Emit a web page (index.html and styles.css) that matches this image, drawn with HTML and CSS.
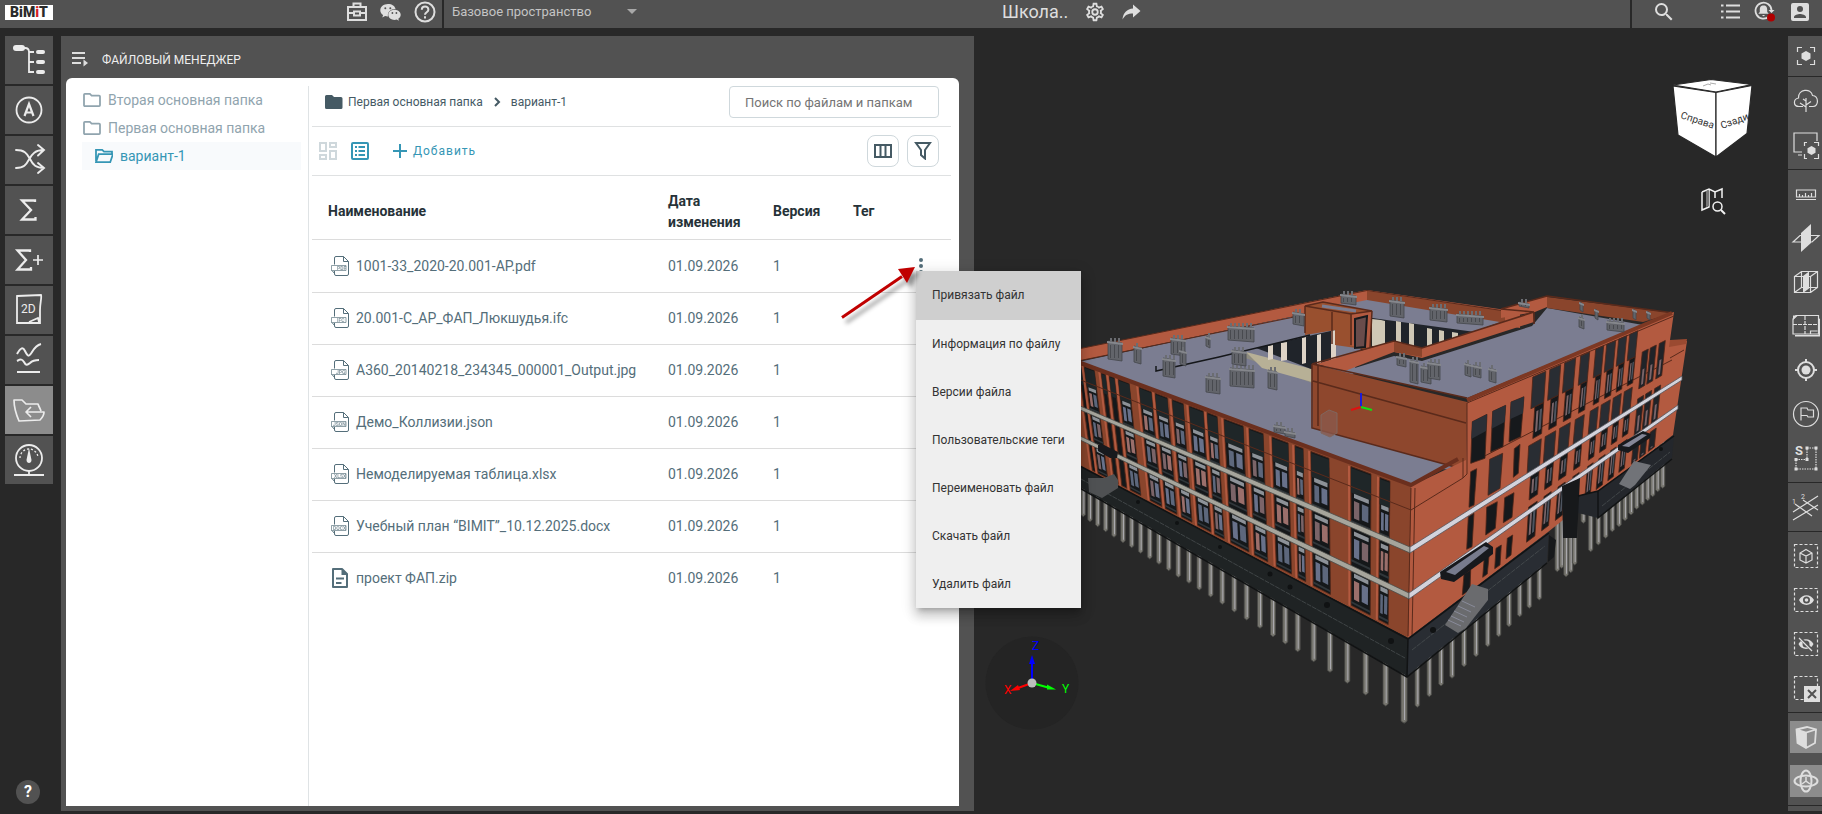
FILE: index.html
```html
<!DOCTYPE html>
<html lang="ru">
<head>
<meta charset="utf-8">
<title>BiMiT</title>
<link rel="stylesheet" href="styles.css">
</head>
<body>
<svg class="defs" aria-hidden="true">
  <defs>
    <symbol id="folder" viewBox="2 3 20 18"><path d="M9.2 6l2 2H20v10H4V6h5.2M10 4H4a2 2 0 0 0-2 2v12c0 1.1.9 2 2 2h16a2 2 0 0 0 2-2V8a2 2 0 0 0-2-2h-8z"/></symbol>
    <symbol id="page" viewBox="0 0 18 20">
      <path d="M3.500 8.500V2Q3.500.5 5 .5H12.500L17.500 5.500V18Q17.500 19.500 16 19.500H5Q3.500 19.500 3.500 18V15M12.500.5V5.500H17.500" fill="none" stroke="currentColor"/>
      <path d="M.5 9.500H15V14.500H.5zM.5 14.500L3 17V15" fill="#fff" stroke="currentColor" stroke-opacity=".65"/>
    </symbol>
  </defs>
</svg>

<header class="topbar">
  <div class="top-left">
    <a class="logo" href="#" aria-label="BiMiT"><span>B</span><span>i</span><span>M</span><span class="red">i</span><span>T</span></a>
    <nav class="top-tools">
      <button aria-label="Проекты"><svg width="20" height="20" viewBox="0 0 20 20" fill="none" stroke="currentColor" stroke-width="2"><path d="M1 5h18v13H1zM6.500 5V1.500h7V5M1 11h6M13 11h6M7 9.500h6v4H7z"/></svg></button>
      <button aria-label="Чат"><svg width="21" height="18" viewBox="0 0 21 18"><path fill="currentColor" d="M8 1C3.600 1 .3 3.800.3 7.200c0 2 1.100 3.700 2.800 4.900l-.8 2.400 2.800-1.400c1 .3 2 .5 2.900.4-.8-4.200 2.500-7.500 7.500-7.400C15 3 12 1 8 1z"/><path fill="currentColor" d="M14.500 6.700c-3.600 0-6.200 2.300-6.200 5 0 2.900 2.800 5.200 6.200 5.200.8 0 1.500-.1 2.200-.3l2.200 1.200-.6-2c1.500-1 2.400-2.400 2.400-4.100 0-2.700-2.800-5-6.200-5z"/><g fill="#525252"><circle cx="5.300" cy="5.300" r="1"/><circle cx="10.300" cy="5.300" r="1"/><circle cx="12.400" cy="10" r=".9"/><circle cx="16.400" cy="10" r=".9"/></g></svg></button>
      <button aria-label="Справка"><svg width="22" height="22" viewBox="0 0 22 22" fill="none" stroke="currentColor" stroke-width="2"><circle cx="11" cy="11" r="9.500"/><path d="M7.800 8.700c0-4.200 6.600-4.200 6.600 0 0 2.500-3.400 2.600-3.400 5M11 15.200v2.200"/></svg></button>
    </nav>
  </div>
  <div class="top-space">
    <select class="space-select" aria-label="Пространство"><option>Базовое пространство</option></select>
    <svg class="caret" width="10" height="5" viewBox="0 0 10 5"><path d="M0 0h10L5 5z" fill="currentColor"/></svg>
  </div>
  <div class="top-project">
    <h1>Школа..</h1>
    <button aria-label="Настройки"><svg width="22" height="22" viewBox="0 0 24 24"><path fill="currentColor" d="M12 8a4 4 0 1 1 0 8 4 4 0 0 1 0-8m0 2a2 2 0 1 0 0 4 2 2 0 0 0 0-4M10 22c-.25 0-.46-.18-.5-.42l-.37-2.650c-.63-.25-1.170-.59-1.690-.99l-2.490 1.010c-.22.08-.49 0-.61-.22l-2-3.460c-.13-.22-.07-.49.12-.64l2.110-1.660L4.500 12l.07-1-2.110-1.630c-.19-.15-.25-.42-.12-.64l2-3.460c.12-.22.39-.31.61-.22l2.490 1c.52-.39 1.060-.73 1.690-.98l.37-2.650c.04-.24.25-.42.5-.42h4c.25 0 .46.18.5.42l.37 2.650c.63.25 1.170.59 1.690.98l2.490-1c.22-.09.49 0 .61.22l2 3.460c.13.22.07.49-.12.64L19.430 11l.07 1-.07 1 2.110 1.630c.19.15.25.42.12.64l-2 3.460c-.12.22-.39.31-.61.22l-2.490-1c-.52.39-1.060.73-1.690.98l-.37 2.650c-.04.24-.25.42-.5.42zM11.250 4l-.37 2.610c-1.200.25-2.260.89-3.030 1.780L5.440 7.350l-.75 1.300L6.800 10.200c-.4 1.170-.4 2.440 0 3.600l-2.120 1.560.75 1.300 2.430-1.040c.77.88 1.820 1.520 3.010 1.760l.37 2.620h1.520l.37-2.610c1.190-.25 2.240-.89 3.010-1.770l2.430 1.040.75-1.300-2.120-1.550c.4-1.170.4-2.440 0-3.610l2.110-1.550-.75-1.300-2.410 1.040c-.77-.89-1.830-1.530-3.030-1.770L12.750 4z"/></svg></button>
    <button aria-label="Поделиться"><svg width="19" height="16" viewBox="0 0 19 16"><path fill="currentColor" d="M11 0.500L18.500 7 11 13.500V9.500C6 9.500 3 11 .5 15.500 1 9 5 5 11 4.500z"/></svg></button>
  </div>
  <div class="top-right">
    <button aria-label="Поиск"><svg width="24" height="24" viewBox="0 0 24 24"><path fill="currentColor" d="M15.500 14h-.79l-.28-.27A6.470 6.470 0 0 0 16 9.500 6.500 6.500 0 1 0 9.500 16c1.610 0 3.090-.59 4.230-1.570l.27.280v.79l5 4.990L20.490 19zm-6 0a4.500 4.500 0 1 1 0-9 4.500 4.500 0 0 1 0 9z"/></svg></button>
    <span class="grow"></span>
    <button aria-label="Список"><svg width="20" height="18" viewBox="0 0 20 18" stroke="currentColor" stroke-width="2"><path d="M0 2.500h2.500M5 2.500h14M0 8.500h2.500M5 8.500h14M0 14.500h2.500M5 14.500h14"/></svg></button>
    <button aria-label="Уведомления"><svg width="21" height="21" viewBox="0 0 21 21"><path d="M15 15.500A8 8 0 1 1 17.500 9" fill="none" stroke="currentColor" stroke-width="1.800"/><path fill="currentColor" d="M9.500 4.500c-3 0-3.700 2-3.700 4.500v2l-1.500 1.800h10.400L13.200 11V9c0-2.500-.7-4.500-3.700-4.500zM8.300 14h2.500c0 1.500-2.500 1.500-2.500 0zM14.500 9h6L17.500 12z"/><circle cx="17" cy="16.500" r="4" fill="#b00000"/></svg></button>
    <button aria-label="Профиль"><svg width="24" height="24" viewBox="0 0 24 24"><path fill="currentColor" d="M3 5v14a2 2 0 0 0 2 2h14a2 2 0 0 0 2-2V5a2 2 0 0 0-2-2H5a2 2 0 0 0-2 2zm12 4a3 3 0 1 1-6 0 3 3 0 0 1 6 0zm-9 8c0-2 4-3.100 6-3.100s6 1.100 6 3.100v1H6z"/></svg></button>
  </div>
</header>

<main class="workspace">
  <nav class="rail">
    <button aria-label="Структура"><svg viewBox="0 0 48 48" fill="none" stroke="currentColor" stroke-width="1.800"><path d="M14 12h6q4 0 4 4v20h5M24 16h5M24 26h5"/><g fill="currentColor" stroke="none"><rect x="8" y="9" width="12" height="6" rx="3"/><rect x="31" y="14" width="9" height="4" rx="2"/><rect x="31" y="24" width="9" height="4" rx="2"/><rect x="31" y="34" width="9" height="4" rx="2"/></g></svg></button>
    <button aria-label="Атрибуты"><svg viewBox="0 0 48 48" fill="none" stroke="currentColor" stroke-width="1.800"><circle cx="24" cy="24" r="12.500"/><path stroke-width="2.200" d="M19.500 30L24 18l4.500 12M21 26.500h6"/></svg></button>
    <button aria-label="Коллизии"><svg viewBox="0 0 48 48" fill="none" stroke="currentColor" stroke-width="1.900" stroke-linecap="round"><path d="M11 14c8 0 11 3 14 9s6 9 14 9M11 32c8 0 10-3 13-8.500S30 14 39 14M33 9l6 5-6 5.500M33 27l6 5-6 5"/></svg></button>
    <button aria-label="Сумма"><svg viewBox="0 0 48 48" fill="none" stroke="currentColor" stroke-width="2.300"><path d="M30 16v-1.500H17L26 24 17 33.500H30.500V31"/></svg></button>
    <button aria-label="Сумма плюс"><svg viewBox="0 0 48 48" fill="none" stroke="currentColor" stroke-width="2.300"><path d="M25 16v-1.500H12.500L21 24 12.500 33.500H26V31"/><path stroke-width="1.700" d="M28 24h10M33 19v10"/></svg></button>
    <button aria-label="Чертежи 2D"><svg viewBox="0 0 48 48" fill="none" stroke="currentColor" stroke-width="1.800"><path d="M12 10l24-1c1 2-1 8-1 15v13H12zM24 36l9-4 1 4"/><text x="16" y="27" class="glyph">2D</text></svg></button>
    <button aria-label="Графики"><svg viewBox="0 0 48 48" fill="none" stroke="currentColor" stroke-width="2"><path d="M12 18c4-7 6-7 8-3 3 6 4 6 7 1 3-5 5-7 9-8M12 25c4-2 5-2 7 1 2 4 3 3 6 1 3-3 6-3 9-3M12 36h23"/></svg></button>
    <button class="active" aria-label="Файловый менеджер"><svg viewBox="0 0 48 48" fill="none" stroke="currentColor" stroke-width="1.700" stroke-linejoin="round"><path d="M36 25c-1-3-2-4-3-7L21 18l-4-4H9c0 7 2 14 5 21l21-1c2-2 4-5 4-8H21M26 21l-5 5 5 5"/></svg></button>
    <button aria-label="Показатели"><svg viewBox="0 0 48 48" fill="none" stroke="currentColor" stroke-width="1.800"><circle cx="24" cy="22" r="13"/><path d="M15 22a9 9 0 0 1 18 0" stroke-width="1.300" stroke-dasharray="2 2"/><path d="M24 12l2.500 12c0 4-5 4-5 0z" fill="currentColor" stroke="none"/><path d="M24 35v3.500M9 39h30"/></svg></button>
    <span class="grow"></span>
    <button class="help" aria-label="Помощь">?</button>
  </nav>

  <section class="panel">
    <header class="panel-head">
      <svg width="17" height="15" viewBox="0 0 17 15" stroke="currentColor" stroke-width="2"><path d="M0 1h13M0 6h13M0 11h9"/><path d="M11.500 7.500l4.500 3.500-4.500 3.500z" fill="currentColor" stroke="none"/></svg>
      <h2>ФАЙЛОВЫЙ МЕНЕДЖЕР</h2>
    </header>
    <div class="sheet">
      <nav class="tree">
        <a href="#"><svg><use href="#folder"/></svg>Вторая основная папка</a>
        <a href="#"><svg><use href="#folder"/></svg>Первая основная папка</a>
        <a href="#" class="current"><svg viewBox="2 3 20 18"><path d="M3 18V5h7l2 2h9v3M3 19L6 10h16l-3 9z" fill="none" stroke="currentColor" stroke-width="2"/></svg>вариант-1</a>
      </nav>
      <div class="content">
        <div class="crumb-row">
          <nav class="crumbs">
            <svg width="18" height="14" viewBox="0 0 18 14"><path d="M1.500 0H7l2 2h7a1.500 1.500 0 0 1 1.500 1.500v9A1.500 1.500 0 0 1 16 14H1.500A1.500 1.500 0 0 1 0 12.500v-11A1.500 1.500 0 0 1 1.500 0z" fill="currentColor"/></svg>
            <a href="#">Первая основная папка</a>
            <svg class="chev" width="7" height="10" viewBox="0 0 7 10"><path d="M1 1l4 4-4 4" fill="none" stroke="currentColor" stroke-width="2"/></svg>
            <a href="#">вариант-1</a>
          </nav>
          <input class="search" type="text" placeholder="Поиск по файлам и папкам" aria-label="Поиск по файлам и папкам">
        </div>
        <div class="tool-row">
          <button class="view off" aria-label="Плитка"><svg width="18" height="18" viewBox="0 0 18 18" fill="none" stroke="currentColor" stroke-width="2"><path d="M1 1h6v8H1zM11 1h6v4h-6zM1 13h6v4H1zM11 9h6v8h-6z"/></svg></button>
          <button class="view" aria-label="Список"><svg width="18" height="18" viewBox="0 0 18 18" fill="none" stroke="currentColor" stroke-width="2"><rect x="1" y="1" width="16" height="16" rx="1"/><path d="M4 5h2M7.500 5h6.500M4 9h2M7.500 9h6.500M4 13h2M7.500 13h6.500"/></svg></button>
          <button class="add"><svg width="14" height="14" viewBox="0 0 14 14"><path d="M7 0v14M0 7h14" stroke="currentColor" stroke-width="2"/></svg>Добавить</button>
          <span class="grow"></span>
          <button class="boxed" aria-label="Колонки"><svg width="18" height="14" viewBox="0 0 18 14" fill="none" stroke="currentColor" stroke-width="2"><path d="M1 1h16v12H1zM6.500 1v12M11.500 1v12"/></svg></button>
          <button class="boxed" aria-label="Фильтр"><svg width="18" height="18" viewBox="0 0 18 18" fill="none" stroke="currentColor" stroke-width="2"><path d="M2 1h14l-5 7v8.500L7 13V8z"/></svg></button>
        </div>
        <table class="files">
          <colgroup><col><col class="c-date"><col class="c-ver"><col class="c-tag"><col class="c-act"></colgroup>
          <thead><tr><th>Наименование</th><th>Дата изменения</th><th>Версия</th><th>Тег</th><th></th></tr></thead>
          <tbody>
            <tr><td><a href="#"><svg class="fi"><use href="#page"/><text x="6" y="14">PDF</text></svg>1001-33_2020-20.001-АР.pdf</a></td><td>01.09.2026</td><td>1</td><td></td>
              <td class="actions">
                <button class="more" aria-label="Действия"><svg width="4" height="16" viewBox="0 0 4 16" fill="currentColor"><circle cx="2" cy="2" r="2"/><circle cx="2" cy="8" r="2"/><circle cx="2" cy="14" r="2"/></svg></button>
                <div class="menu" role="menu">
                  <button role="menuitem" class="hover">Привязать файл</button>
                  <button role="menuitem">Информация по файлу</button>
                  <button role="menuitem">Версии файла</button>
                  <button role="menuitem">Пользовательские теги</button>
                  <button role="menuitem">Переименовать файл</button>
                  <button role="menuitem">Скачать файл</button>
                  <button role="menuitem">Удалить файл</button>
                </div>
                <svg class="pointer" width="84" height="64" viewBox="0 0 84 64"><path d="M2 53.500L62 12.500" stroke="#c00000" stroke-width="3"/><path d="M75 3L58 5l9 14z" fill="#c00000"/></svg>
              </td></tr>
            <tr><td><a href="#"><svg class="fi"><use href="#page"/><text x="6" y="14">IFC</text></svg>20.001-С_АР_ФАП_Люкшудья.ifc</a></td><td>01.09.2026</td><td>1</td><td></td><td></td></tr>
            <tr><td><a href="#"><svg class="fi"><use href="#page"/><text x="5" y="14">JPG</text></svg>A360_20140218_234345_000001_Output.jpg</a></td><td>01.09.2026</td><td>1</td><td></td><td></td></tr>
            <tr><td><a href="#"><svg class="fi"><use href="#page"/><text x="2" y="14">JSON</text></svg>Демо_Коллизии.json</a></td><td>01.09.2026</td><td>1</td><td></td><td></td></tr>
            <tr><td><a href="#"><svg class="fi"><use href="#page"/><text x="3" y="14">XLSX</text></svg>Немоделируемая таблица.xlsx</a></td><td>01.09.2026</td><td>1</td><td></td><td></td></tr>
            <tr><td><a href="#"><svg class="fi"><use href="#page"/><text x="2" y="14">DOCX</text></svg>Учебный план “BIMIT”_10.12.2025.docx</a></td><td>01.09.2026</td><td>1</td><td></td><td></td></tr>
            <tr><td><a href="#"><svg class="fi" viewBox="0 0 18 20"><path d="M2 1h9l5 5v13H2z" fill="none" stroke="currentColor" stroke-width="2" stroke-linejoin="round"/><path d="M10.500 1v6H17zM5 9.500h8v2H5zM5 14h5.500v2H5z" fill="currentColor"/></svg>проект ФАП.zip</a></td><td>01.09.2026</td><td>1</td><td></td><td></td></tr>
          </tbody>
        </table>
      </div>
    </div>
  </section>

  <section class="viewport" aria-label="3D-модель">
    <svg id="scene" viewBox="974 28 814 786" preserveAspectRatio="xMidYMid meet">
      <g id="piles"></g>
      <!-- rear wing and courtyard -->
      <path fill="#b35a40" d="M1078 349L1367 290 1520 312 1520 328 1367 301 1078 361z"/>
      <path fill="#8a452c" d="M1367 291L1505 311 1505 324 1367 301z"/>
      <path fill="#7b7d91" d="M1078 362L1310 313 1310 306 1352 303 1367 300 1500 322 1466 335 1370 318 1350 385 1466 470 1438 469 1410 487z"/>
      <path fill="#7b7d91" d="M1078 363L1304 315 1315 425 1466 455 1436 470 1410 485z"/>
      <path fill="none" stroke="#5a2a1b" d="M1078 349L1367 290.500 1505 311M1078 361L1304 315"/>
      <path fill="#8e8c80" d="M1243 352L1312 371v12L1243 357z"/>
      <path fill="#b7b096" d="M1246 352L1312 369v13L1262 368z"/>
      <path fill="#20242a" d="M1256 348L1335 330v34l-24 5z"/>
      <g id="court"></g>
      <path fill="#20242a" d="M1372 318L1475 332 1420 352 1372 346z"/>
      <g id="court2"></g>
      <path fill="#99502f" d="M1305 306L1323 302 1372 311 1370 350 1335 345V330L1305 335z"/>
      <path fill="#b35a40" d="M1352 314L1372 310 1370 348 1352 346z"/>
      <path fill="#694c4b" stroke="#17191c" stroke-width="2" d="M1355 319L1367 316 1365 347 1355 348z"/>
      <path fill="none" stroke="#5a2a1b" stroke-width="1.500" d="M1305 306L1323 302 1372 311 1351 314zM1305 306V333M1332 312V344M1351 314V345M1372 311L1370 348"/>
      <path stroke="#7b7d91" stroke-width="3" d="M1322 306L1356 311"/>
      <path stroke="#15171a" stroke-width="1.500" fill="none" d="M1156 366v5L1219 357 1310 335"/>
      <!-- main block -->
      <path fill="#8e472d" d="M1312 364L1467 402 1466 470 1313 428z"/>
      <path fill="#b35a40" d="M1316 364L1394 341 1422 348 1533 312 1534 322 1422 358 1394 352 1345 371z"/>
      <path fill="#8a452c" d="M1394 342L1422 348V357L1394 352z"/>
      <path fill="#7b7d91" d="M1345 371L1394 356 1422 361 1532 326 1547 308 1643 325 1467 398z"/>
      <path fill="#b35a40" d="M1501 309L1547 296V307L1535 312 1501 318z"/>
      <path fill="#8a452c" d="M1547 297L1673 313 1643 322 1547 308z"/>
      <path fill="none" stroke="#5a2a1b" stroke-width="1.600" d="M1312 364L1394 341 1422 348 1534 312 1501 309 1547 296 1674 313M1534 312v12M1345 371L1312 364M1313 381L1466 423M1318 366V426M1312 364V428L1466 470M1345 371L1467 398"/>
      <!-- side facade -->
      <path fill="#b35a40" d="M1408 638L1411 486 1466 460 1467 402 1674 312 1670 340 1687 341 1673 435 1598 492 1548 532z"/>
      <path fill="none" stroke="#7d3823" stroke-width="4" d="M1467 400L1672 313"/>
      <path fill="none" stroke="#5a2a1b" d="M1467 403L1674 316M1411 510L1463 478M1471 463L1672 360M1670 358L1684 350"/>
      <path fill="#9a4a31" d="M1670 340L1687 339 1686 344 1669 347z"/>
      <g id="side"></g>
      <!-- front facade -->
      <path fill="#8a452c" d="M1078 362L1411 486 1408 638 1078 465z"/>
      <g id="front"></g>
      <path fill="none" stroke="#6b2f1e" stroke-width="4" d="M1078 362L1411 485 1458 459"/>
      <path fill="none" stroke="#5a2a1b" d="M1078 379L1411 510M1415 488L1412 636M1411 488L1408 636M1463 458V478L1467 474V403"/>
      <!-- bands -->
      <path fill="#a6a59c" stroke="#4b4c49" stroke-width=".8" d="M1078 405L1410 547V553L1078 409zM1078 435L1409 593V599L1078 439z"/>
      <path fill="#d3d3dc" stroke="#55565c" stroke-width=".8" d="M1410 547L1682 376V380L1410 553zM1409 593L1678 405V409L1409 599z"/>
      <!-- plinth -->
      <path fill="#1f2324" d="M1078 465L1408 638 1407 676 1078 486z"/>
      <path fill="#292d33" d="M1408 638L1549 532 1547 562 1407 676z"/>
      <path fill="#24272c" d="M1578 496L1598 491 1674 435 1672 458 1598 518 1578 513z"/>
      <path fill="#17191b" d="M1562 486L1580 478 1577 538H1563zM1549 535L1556 540 1554 557 1548 562z"/>
      <path fill="none" stroke="#111314" stroke-width="1.500" d="M1078 465L1408 639 1549 533M1078 487L1407 677 1547 563M1408 639L1407 676M1578 496L1598 491 1674 436M1598 491V518L1672 459"/>
      <path fill="none" stroke="#4d5355" stroke-width=".7" stroke-dasharray="5 1" d="M1081 479L1405 658M1412 650L1545 546M1602 506L1670 452"/>
      <!-- canopies and stairs -->
      <path fill="#17191d" d="M1440 572L1486 542 1493 547V554L1454 582 1441 579z"/>
      <path fill="#777b8d" d="M1446 572L1484 546 1489 548 1455 575z"/>
      <path fill="#17191d" d="M1618 445L1643 431 1651 434 1650 438 1628 453 1618 450z"/>
      <path fill="#858798" d="M1622 446L1642 434 1647 435 1629 447z"/>
      <path fill="#17191d" d="M1098 445L1104 445 1118 452 1117 458 1110 458 1098 451z"/>
      <path fill="#6a6b6e" d="M1445 625L1472 584 1488 589V600L1466 628 1458 633z"/>
      <path stroke="#898b9a" d="M1448 620l13 6M1451 616l13 6M1454 611l13 6M1458 606l13 6M1462 601l13 6"/>
      <path fill="#717378" d="M1619 484L1634 461 1651 465 1635 485 1630 489z"/>
      <path fill="#4f5153" d="M1088 478L1104 478 1114 474 1118 480V488L1102 498 1089 492z"/>
      <g fill="#101213"><circle cx="1138" cy="502" r="2"/><circle cx="1177" cy="523" r="2"/><circle cx="1220" cy="547" r="2"/><circle cx="1270" cy="574" r="2.500"/><circle cx="1290" cy="587" r="2.500"/><circle cx="1327" cy="605" r="3"/><circle cx="1391" cy="641" r="3"/><circle cx="1433" cy="630" r="3"/><circle cx="1661" cy="449" r="2"/></g>
      <g id="vents"></g>
      <path fill="#8b594b" fill-opacity=".8" stroke="#80665e" d="M1321 415l8-5 8 3v20l-7 4-9-4z"/>
      <g fill="none" stroke-width="2"><path stroke="#1b1bd8" d="M1361 407V393"/><path stroke="#e01010" d="M1361 407l-10 3"/><path stroke="#10e010" d="M1361 407l11 3"/></g>
      <!-- orientation cube -->
      <g stroke="#282828" stroke-width="1.200" stroke-linejoin="round" fill="#fff">
        <path d="M1673 85L1711 79.500 1752 84.500 1716 92z"/><path d="M1673 86L1716 92.500V157L1678 135z"/><path d="M1752 85.500L1716 92.500V157L1747 133.500z"/>
      </g>
      <g class="cube-label"><text x="1680" y="118" transform="rotate(18 1680 118)">Справа</text><text x="1722" y="129" transform="rotate(-20 1722 129)">Сзади</text></g>
      <path d="M1703 86l5-2 3 1M1710 83l6 1" fill="none" stroke="#888" stroke-width=".7"/>
      <g fill="none" stroke="#f2f2f2" stroke-width="1.500"><path d="M1702 192l7-3 6 3 7-3v9M1702 192v18l7-3v-18M1715 192v6"/><circle cx="1717.500" cy="206.500" r="4.500"/><path stroke-width="2" d="M1721 210l4 4"/></g>
      <path fill="#777" d="M1706 191l3-1v16l-3 1z"/>
      <!-- axis gizmo -->
      <circle cx="1032" cy="683" r="46.500" fill="#242424"/>
      <g stroke-width="2"><path stroke="#00f" d="M1032 683V664"/><path stroke="#f00" d="M1032 683L1018 688"/><path stroke="#0f0" d="M1032 683L1048 687.500"/></g>
      <path fill="#00f" d="M1032 655l3 9h-6z"/><path fill="#f00" d="M1010 691l8-6 2 5z"/><path fill="#0f0" d="M1056 689.500l-9-5v5z"/>
      <circle cx="1032" cy="683" r="4.500" fill="#bdbdbd"/>
      <g class="axis-label"><text x="1032" y="650" fill="#00f">Z</text><text x="1004" y="694" fill="#f00">X</text><text x="1062" y="693" fill="#0f0">Y</text></g>
    </svg>
  </section>

  <nav class="tools">
    <div class="single"><button aria-label="Фокус"><svg viewBox="0 0 32 32"><path d="M12 7.500H7.500V12M20 7.500h4.500V12M12 24.500H7.500V20M20 24.500h4.500V20"/><path class="f" d="M16 11l4.500 2.500v5L16 21l-4.500-2.500v-5z"/></svg></button></div>
    <div>
      <button aria-label="Дерево"><svg viewBox="0 0 32 32"><path d="M13 21.500H9C3 21.500 3 14 8.500 13 8 4 21 2.500 22.500 10.500 29 11 29 21.500 23 21.500H19M16 27V13M16 22l-6-4M16 20l5-3.500M16 16l-3-2"/></svg></button>
      <button aria-label="Область"><svg viewBox="0 0 32 32"><path d="M12 23H4V4h23v8M8 26h4M17 13.500h-2.500V17M24 13.500h4.500V17M17 29.500h-2.500V25M24 29.500h4.500V25"/><path class="f" d="M21.500 17l4 2.200v4.600l-4 2.200-4-2.200v-4.600z"/></svg></button>
    </div>
    <div>
      <button aria-label="Линейка"><svg viewBox="0 0 32 32"><path d="M6.500 12h19v7h-19zM9.500 19v-3M12.500 19v-2M15.500 19v-4M18.500 19v-2M21.500 19v-4M6 21.500h20"/></svg></button>
      <button aria-label="Сечение"><svg viewBox="0 0 32 32"><path class="f" d="M11 11L21 2v19L11 30z"/><path d="M10 13.500h19L22 20H3z"/></svg></button>
      <button aria-label="Секущий куб"><svg viewBox="0 0 32 32"><path d="M4.500 10.500h16v16h-16zM4.500 10.500l7-5h16v16l-7 5M20.500 10.500l7-5M11.500 5.500v16l-7 5M11.500 21.500h16"/><path class="f" d="M13 10l6-4.500v17L13 27z"/></svg></button>
      <button aria-label="План"><svg viewBox="0 0 32 32"><path d="M6 5.500h22.500v18.500H3V9zM20.500 24v-3h7"/><path stroke-dasharray="4 1" d="M15 6v18M3 14.500h25"/><path class="f" d="M3 5.500h5L3 10zM5 25h23.500V8l1.500 1v17.500H5z"/></svg></button>
      <button aria-label="Центр"><svg viewBox="0 0 32 32"><circle cx="16" cy="16" r="8" stroke-width="2"/><circle class="f" cx="16" cy="16" r="4.500"/><path stroke-width="2" d="M16 5v4M16 23v4M5 16h4M23 16h4"/></svg></button>
      <button aria-label="Отметка"><svg viewBox="0 0 32 32"><circle cx="16" cy="16" r="12.500"/><path d="M11 22.500V10h6l1 2h5.500v7H18l-1-1.500h-6"/></svg></button>
      <button aria-label="Площадь"><svg viewBox="0 0 32 32"><path stroke-dasharray="1.500 1" d="M6 17.500h11V6h9v21H6z"/><path class="f" d="M4.500 16h3v3h-3zM15.500 16h3v3h-3zM15.500 4.500h3v3h-3zM24.500 4.500h3v3h-3zM4.500 25.500h3v3h-3zM24.500 25.500h3v3h-3z"/><text x="5" y="13" class="s">S</text></svg></button>
    </div>
    <div><button aria-label="Оси"><svg viewBox="0 0 32 32"><path d="M3 21L28 5M3 29L28 14M5 13l17 12M13 9l15 10"/><text x="2" y="13" class="n">1</text><text x="11" y="8" class="n">2</text></svg></button></div>
    <div>
      <button aria-label="Изолировать"><svg viewBox="0 0 32 32"><path stroke-dasharray="3 2" d="M4.500 4.500h23v23h-23z"/><path d="M16 9.500l6 3.500v7l-6 3-6-3v-7zM10 13l6 3 6-3M16 16v7"/></svg></button>
      <button aria-label="Показать"><svg viewBox="0 0 32 32"><path stroke-dasharray="3 2" d="M4.500 4.500h23v23h-23z"/><path class="f" fill-rule="evenodd" d="M9 16c3-6.500 12-6.500 15 0-3 6.500-12 6.500-15 0zm11 0a3.500 3.500 0 1 0-7 0 3.500 3.500 0 0 0 7 0z"/><circle class="f" cx="16.500" cy="16" r="1.800"/></svg></button>
      <button aria-label="Скрыть"><svg viewBox="0 0 32 32"><path stroke-dasharray="3 2" d="M4.500 4.500h23v23h-23z"/><path class="f" fill-rule="evenodd" d="M8.500 16c3-6.500 12-6.500 15 0-3 6.500-12 6.500-15 0zm11 0a3.500 3.500 0 1 0-7 0 3.500 3.500 0 0 0 7 0z"/><path stroke="#525252" stroke-width="3" d="M9 9l14 14"/><path d="M9 10l13 13"/></svg></button>
      <button aria-label="Сбросить"><svg viewBox="0 0 32 32"><path stroke-dasharray="3 2" d="M4.500 4.500h23v23h-23z"/><path class="f" d="M14 14h16v16H14z"/><path stroke="#525252" stroke-width="2" d="M18 18l8 8M26 18l-8 8"/></svg></button>
    </div>
    <div class="modes">
      <button class="active" aria-label="Перспектива"><svg viewBox="0 0 32 32"><path stroke-width="1.800" d="M6.500 8.500L17 6l9 2.500L25 22l-9 5-8.500-5zM16 11.500v15M6.500 8.500l9.500 3 10-3"/><path class="f" d="M6.500 8.500l9.500 3V27l-8.500-5z"/></svg></button>
      <button class="active" aria-label="Вращение"><svg viewBox="0 0 32 32"><ellipse cx="16" cy="16" rx="11.500" ry="5.500" stroke-width="2"/><ellipse cx="16" cy="16" rx="5.500" ry="10.500" stroke-width="2"/><path stroke-width="1.500" d="M16 12v4l4 3M16 16l-4 3"/></svg></button>
    </div>
    <div class="rest"></div>
  </nav>
</main>
<script src="scene.js"></script>
</body>
</html>
```
FILE: styles.css
```css
* { box-sizing: border-box; }
html, body { height: 100%; }
body {
  margin: 0;
  display: flex;
  flex-direction: column;
  background: #282828;
  color: #dedede;
  font: 14px/20px Roboto, "Noto Sans", sans-serif;
  overflow: hidden;
}
button, select, input { font: inherit; color: inherit; }
button { display: grid; place-items: center; padding: 0; border: 0; background: none; cursor: pointer; }
a { color: inherit; text-decoration: none; }
h1, h2 { margin: 0; font-weight: 400; }
svg { display: block; }
.defs { position: absolute; width: 0; height: 0; }
.grow { flex: 1; }

.topbar { display: flex; flex: 0 0 28px; background: #525252; }
.topbar > div { display: flex; align-items: center; height: 28px; min-width: 0; padding-bottom: 5px; }
.top-left { flex: 431 1 0; justify-content: space-between; padding-left: 5px; padding-right: 6px; }
.logo {
  display: flex; width: 48px; height: 15px; margin-top: 2px; justify-content: center; align-items: center;
  background: #fff; color: #2b2b2b; font: 900 14px/15px Roboto, sans-serif;
}
.logo .red { color: #d81f26; }
.top-tools { display: flex; align-items: center; gap: 13px; }
.top-space { flex: 550 1 0; gap: 31px; border-left: 2px solid #282828; padding-left: 8px; color: #c4c4c4; }
.space-select { appearance: none; width: 144px; padding: 0; border: 0; background: none; outline: 0; font-size: 13px; }
.caret { color: #a8a8a8; }
.top-project { flex: 628 1 0; gap: 16px; }
.top-project h1 { font-size: 18px; line-height: 20px; }
.top-right { flex: 160 1 0; gap: 13px; border-left: 2px solid #282828; padding-left: 20px; padding-right: 10px; }

.workspace { display: flex; flex: 1; min-height: 0; padding-top: 8px; }
.rail { display: flex; flex: 0 0 61px; flex-direction: column; gap: 2px; padding: 0 0 10px 5px; }
.rail button { width: 48px; height: 48px; background: #525252; color: #ececec; }
.rail button svg { width: 48px; height: 48px; }
.rail .active { background: #8c8c8c; }
.rail .glyph { font-size: 12px; fill: currentColor; stroke: none; }
.rail .help { width: 24px; height: 24px; margin-left: 11px; border-radius: 50%; font-size: 16px; font-weight: 700; color: #fff; }

.panel { display: flex; flex: 893 1 0; flex-direction: column; min-width: 0; margin-bottom: 3px; padding: 0 15px 5px 5px; background: #525252; position: relative; z-index: 2; }
.panel-head { display: flex; align-items: center; flex: 0 0 42px; gap: 13px; padding: 5px 0 0 6px; }
.panel-head h2 { font-size: 12px; line-height: 20px; color: #eee; }
.sheet { display: flex; flex: 1; min-height: 0; background: #fff; border-radius: 6px 6px 0 0; padding: 8px 8px 0 16px; }
.tree { flex: 0 0 227px; padding: 0 7px 0 0; border-right: 1px solid #dfe3e5; color: #90a4ae; font-size: 14px; }
.tree a { display: flex; align-items: center; gap: 7px; height: 28px; padding-left: 1px; padding-bottom: 1px; }
.tree svg { width: 18px; height: 16px; fill: currentColor; }
.tree .current { padding-left: 13px; background: #f8fafc; color: #3596b5; }
.content { flex: 1; min-width: 0; padding-left: 3px; color: #546e7a; }
.crumb-row, .tool-row { display: flex; align-items: center; border-bottom: 1px solid #dfe1e2; padding: 0 12px 0 13px; }
.crumb-row { height: 41px; justify-content: space-between; padding-bottom: 8px; }
.crumbs { display: flex; align-items: center; gap: 5px; font-size: 12px; color: #455a64; }
.chev { margin: 0 5px 0 6px; }
.search { width: 210px; height: 32px; padding: 0 15px; border: 1px solid #cfd8dc; border-radius: 4px; background: #fff; outline: 0; font-size: 13px; }
.search::placeholder { color: #757575; opacity: 1; }
.tool-row { height: 49px; padding-left: 7px; }
.view { width: 18px; height: 18px; margin-right: 14px; color: #3596b5; }
.view.off { color: #cfd8dc; }
.add { display: flex; align-items: center; gap: 6px; margin-left: 10px; color: #3596b5; font-size: 12px; letter-spacing: 1px; }
.boxed { width: 32px; height: 32px; margin-left: 8px; border: 1px solid #cfd8dc; border-radius: 8px; color: #455a64; }

.files { width: 100%; border-collapse: collapse; table-layout: fixed; }
.c-date { width: 105px; }
.c-ver { width: 80px; }
.c-tag { width: 54px; }
.c-act { width: 60px; }
.files th { height: 63px; padding: 9px 0 0 16px; text-align: left; font-weight: 700; line-height: 21px; color: #263238; }
.files td { height: 52px; padding: 0 0 0 16px; }
.files tr { border-bottom: 1px solid #dcdcdc; }
.files tbody tr:last-child { border-bottom: 0; }
.files td a { display: flex; align-items: center; gap: 7px; padding-left: 3px; }
.fi { width: 18px; height: 20px; }
.fi text { font: 700 5px/5px Roboto, sans-serif; fill: currentColor; opacity: .7; }
.files .actions { position: relative; height: 53px; padding: 0; }
.more { width: 24px; height: 24px; margin: 0 auto; }
.menu {
  position: absolute; left: 25px; top: 31px; z-index: 5; width: 165px; background: #efefef; color: #333;
  box-shadow: 0 5px 5px -3px rgba(0,0,0,.2), 0 8px 10px 1px rgba(0,0,0,.14), 0 3px 14px 2px rgba(0,0,0,.12);
}
.menu button { display: block; width: 100%; height: 48px; padding: 0 16px; text-align: left; font-size: 12px; }
.menu .hover { height: 49px; background: #cfcfcf; }
.pointer { position: absolute; right: 27px; top: 24px; z-index: 6; filter: drop-shadow(4px 5px 2px rgba(0,0,0,.4)); }

.viewport { flex: 814 1 0; min-width: 0; margin-top: -8px; }
.viewport svg { width: 100%; height: 100%; }
.cube-label { font-size: 10px; fill: #333; }
.axis-label { font-size: 12px; }

.tools { display: flex; flex: 0 0 34px; flex-direction: column; gap: 1px; margin-bottom: 3px; }
.tools > div { display: flex; flex-direction: column; gap: 12px; padding: 8px 0 8px 2px; background: #525252; }
.tools > .single { padding: 4px 0 4px 2px; }
.tools > .rest { flex: 1; padding: 0; }
.tools button { width: 32px; height: 32px; flex: none; }
.tools svg { width: 32px; height: 32px; fill: none; stroke: currentColor; stroke-width: 1.200; }
.tools .f { fill: currentColor; stroke: none; }
.tools .active { background: #8c8c8c; }
.tools text { fill: currentColor; stroke: none; }
.tools .s { font-size: 13px; font-weight: 700; }
.tools .n { font-size: 7px; }
```
FILE: scene.js
```js
const layer = id => document.getElementById(id);
const NS = 'http://www.w3.org/2000/svg';

function poly(target, points, fill, stroke) {
  const p = document.createElementNS(NS, 'path');
  p.setAttribute('d', 'M' + points.map(q => q.map(n => n.toFixed(1)).join(' ')).join('L') + 'z');
  p.setAttribute('fill', fill);
  if (stroke) { p.setAttribute('stroke', stroke); p.setAttribute('stroke-width', '0.8'); }
  target.appendChild(p);
}

// Front facade: x is measured along the cornice, v runs from cornice (0) to plinth (1).
function front(x, v) {
  const u = (x - 1075) / 336;
  const bx = 1090 + u * 318;
  const ty = 361 + u * 125;
  const by = 471 + u * 167;
  return [x + (bx - x) * v, ty + (by - ty) * v];
}
// Side facade, same convention.
function side(x, v) {
  const ty = 402 - (x - 1467) * 0.433;
  const bx = x - Math.min(14, (x - 1411) * 0.085);
  const by = 638 - (bx - 1408) * 0.766;
  return [x + (bx - x) * v, ty + (by - ty) * v];
}
function quad(map, target, x0, x1, v0, v1, fill, stroke) {
  poly(target, [map(x0, v0), map(x1, v0), map(x1, v1), map(x0, v1)], fill, stroke);
}

const glass = ['#68718a', '#9b6f6b', '#5d677c', '#7b6468'];
const frontCols = [[1078,1081],[1084,1094],[1101,1105],[1109,1114],[1118,1129],[1139,1151],[1155,1167],[1172,1183],
  [1189,1203],[1207,1217],[1224,1243],[1249,1263],[1272,1288],[1295,1303],[1311,1329],[1351,1371],[1380,1390]];
const f = layer('front');
frontCols.forEach(([a, b], i) => {
  quad(front, f, a, b, 0.02, 0.98, '#15181a', '#4b2418');
  quad(front, f, a, b, 0.03, 0.2, '#1f2628');
  [[0.22, 0.37], [0.48, 0.64], [0.77, 0.93]].forEach(([v0, v1], t) => {
    const w = b - a;
    if (w < 7) return;
    quad(front, f, a + w * 0.15, b - w * 0.1, v0 - 0.02, v0 + 0.01, '#8d9298');
    quad(front, f, a + w * 0.15, a + w * 0.42, v0 + 0.03, v1, glass[(i + t) % 4]);
    quad(front, f, a + w * 0.55, b - w * 0.12, v0 + 0.03, v1 - 0.01, glass[(i * 2 + t) % 4]);
    quad(front, f, a, b, v1 + 0.02, v1 + 0.035, '#30363a');
  });
  quad(front, f, a - 3, a - 1, 0.02, 0.99, '#b35a40');
});

const s = layer('side');
[[1533,1546],[1550,1561],[1565,1576],[1581,1590],[1596,1604],[1607,1616],[1619,1627],[1630,1638]].forEach(([a, b], i) => {
  const w = b - a;
  [[0.02, 0.2], [0.2, 0.38], [0.41, 0.59], [0.59, 0.73], [0.77, 0.97]].forEach(([v0, v1], t) => {
    const win = t % 2 === 1 || t === 4;
    quad(side, s, win ? a + w * 0.3 : a, b, v0, v1, win ? '#15181b' : '#292d33', '#4b2418');
    if (win) {
      quad(side, s, a + w * 0.45, a + w * 0.62, v0 + 0.03, v1 - 0.03, '#7b6468');
      quad(side, s, a + w * 0.72, a + w * 0.9, v0 + 0.03, v1 - 0.03, '#4d545f');
    }
  });
});
[[1645,1651],[1653,1659],[1662,1668]].forEach(([a, b]) =>
  [[0.19, 0.45], [0.52, 0.78], [0.84, 0.98]].forEach(([v0, v1]) => {
    quad(side, s, a, b, v0, v1, '#202328', '#4b2418');
    quad(side, s, a + 2, a + 4, v0 + 0.13, v1 - 0.02, '#7b6468');
  }));
const z = pts => pts.map(([x, y]) => [1300 + x / 3, 270 + y / 3]);
[
  [[517,455],[561,433],[555,565],[512,580]], [[578,424],[617,406],[609,530],[572,546]], [[633,396],[672,380],[662,500],[627,516]],
  [[512,605],[530,596],[522,705],[507,712]], [[569,568],[608,550],[600,655],[564,676]], [[643,536],[660,523],[655,610],[640,622]],
  [[505,740],[522,730],[516,830],[500,838]], [[560,712],[592,695],[586,775],[557,795]], [[614,683],[642,668],[636,742],[610,758]],
  [[492,912],[512,900],[510,960],[487,975]], [[553,860],[568,850],[562,912],[548,922]], [[588,835],[604,825],[600,885],[584,896]],
  [[622,805],[638,795],[633,855],[618,867]]
].forEach((q, i) => {
  poly(s, z(q), i === 4 ? '#292d33' : '#16191c', '#4b2418');
  const top = [q[0], q[1], [q[1][0] - 3, q[1][1] + 50], [q[0][0] - 3, q[0][1] + 52]];
  if (i < 3) poly(s, z(top), '#2b2f36');
});

// Courtyard walls: alternating light piers.
const pier = (id, x, y, w, h, dy, fill) =>
  poly(layer(id), [[x, y], [x + w, y + dy], [x + w, y + dy + h], [x, y + h]], fill);
[[1268,346,5,14],[1281,343,6,18],[1302,338,4,26],[1317,335,4,29],[1331,331,5,30]].forEach(a => pier('court', ...a, -1, '#ddd3c6'));
[[1372,319,9,27],[1381,320,4,26],[1396,321,5,27],[1409,323,5,26],[1427,328,5,20],[1439,330,5,15],[1452,332,6,10]]
  .forEach(a => pier('court2', ...a, 1, '#cfc8b6'));

// Foundation piles.
const piles = layer('piles');
function pile(x, y0, y1, w = 4.5) {
  poly(piles, [[x - w / 2, y0], [x + w / 2, y0], [x + w / 2, y1 - 2], [x, y1], [x - w / 2, y1 - 2]], '#77766f', '#484845');
  poly(piles, [[x, y0], [x + 1, y0], [x + 1, y1 - 3], [x, y1 - 3]], '#aaa9ae');
}
[[370,710],[390,725],[413,740],[437,755],[462,772],[489,788],[515,803],[542,820],[569,837],[597,853],[626,872],[655,892],
 [687,910],[718,930],[752,951],[787,973],[823,996],[860,1020],[900,1045],[939,1070],[976,1092],[1013,1115],[1061,1145],
 [1110,1177],[1162,1210],[1217,1245],[1277,1278],[1333,1330]].forEach(([x, y]) => {
  const px = 960 + x / 3;
  pile(px, 480 + (px - 1081) * 0.577, 280 + y / 3, 4 + x / 1000);
});
[[352,1312],[388,1280],[423,1248],[456,1225],[492,1190],[528,1160],[563,1130],[596,1100],[627,1070],[659,1040],[688,1015],[718,990],
 [872,845],[895,825],[917,805],[937,785],[957,770],[975,752],[993,735],[1010,718],[1027,705],[1043,692],[1058,680],[1073,665],[1088,655],
 [850,760],[772,905],[785,895],[798,920],[812,908],[824,885]].forEach(([x, y]) => {
  const y1 = 270 + y / 3;
  pile(1300 + x / 3, y1 - 50, y1);
});
pile(1404, 660, 723, 6);

// Roof ventilation stacks: x, y, width, height.
[[1108,341,14,20],[1134,346,7,18],[1171,338,14,18],[1163,358,12,20],[1180,350,6,16],[1206,336,4,12],[1228,326,26,16],[1293,312,11,14],
 [1206,376,14,18],[1230,368,24,20],[1268,370,9,20],[1341,294,15,11],[1390,300,14,18],[1430,307,17,15],[1457,314,26,11],[1232,350,14,16],
 [1397,356,9,11],[1410,360,8,24],[1421,366,10,18],[1428,362,12,18],[1465,363,6,14],[1473,365,8,13],[1489,368,7,15],[1580,302,3,10],
 [1595,309,3,11],[1579,317,5,12],[1607,321,17,11],[1633,309,3,11],[1647,311,3,9],[1519,302,10,6],[1274,425,11,9],[1285,431,10,7]]
.forEach(([x, y, w, h]) => {
  const v = layer('vents');
  poly(v, [[x, y], [x + w, y + 2], [x + w, y + h], [x, y + h - 2]], '#62646a', '#44464b');
  poly(v, [[x - 1, y], [x + w + 1, y + 2], [x + w + 1, y + 4], [x - 1, y + 2]], '#85878c');
  for (let i = 2; i < w - 1; i += 4) {
    poly(v, [[x + i, y - 3], [x + i + 2, y - 3], [x + i + 2, y + 1], [x + i, y + 1]], '#6b6d72');
    poly(v, [[x + i, y + 4], [x + i + 1, y + 4], [x + i + 1, y + h - 3], [x + i, y + h - 3]], '#484a4f');
  }
});
```
